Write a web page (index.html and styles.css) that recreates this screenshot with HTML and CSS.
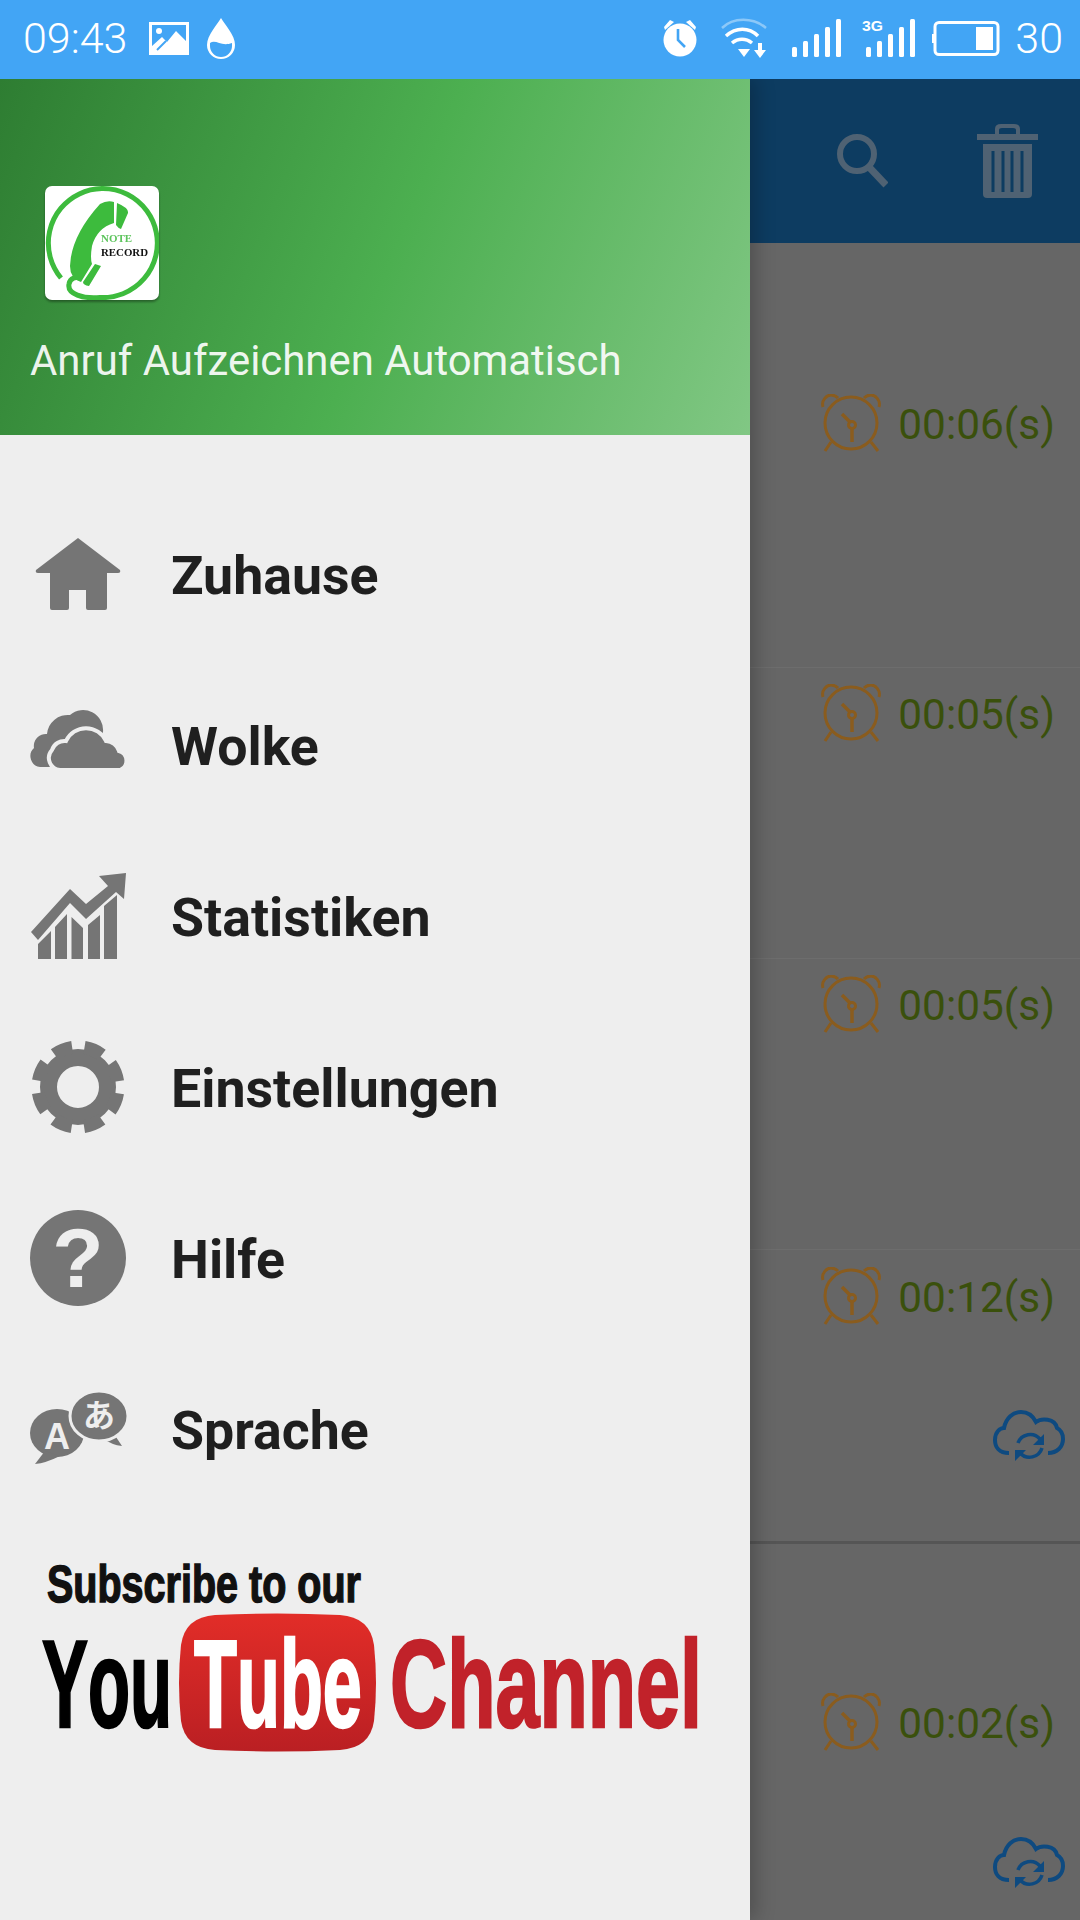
FILE: index.html
```html
<!DOCTYPE html>
<html>
    <head>
        <title>Anruf Aufzeichnen Automatisch</title>
        <meta charset="utf-8" />
        <link rel="stylesheet" href="styles.css">
    </head>
    <body>
        <div class="statusBar">
            <div class="statusGroup">
                <span class="clock">09:43</span>
                <svg class="picIcon" viewBox="0 0 40 33" width="40" height="33">
                    <path fill="#fff" fill-rule="evenodd" d="M0 0H40V33H0ZM3 3V30H37V3Z"/>
                    <path fill="#fff" d="M3 24 13 15 18 20 27 9 37 19V30H3Z"/>
                    <path stroke="#42a5f5" stroke-width="2" fill="none" d="M8 28 17 19"/>
                    <circle cx="10" cy="9" r="3" fill="#fff"/>
                </svg>
                <svg class="dropIcon" viewBox="0 0 28 41" width="28" height="41">
                    <path fill="#fff" d="M14 0C18 7 28 17 28 27A14 14 0 0 1 0 27C0 17 10 7 14 0Z"/>
                    <path fill="#42a5f5" d="M3 25C9 21 14 29 25 25V28A11 11 0 0 1 3 28Z"/>
                </svg>
            </div>
            <div class="statusGroup right">
                <svg class="alarmIcon" viewBox="0 0 36 38" width="36" height="38">
                    <circle cx="18" cy="21" r="16.5" fill="#fff"/>
                    <path fill="#fff" d="M2 8 8 1 12 3 3 11ZM34 8 28 1 24 3 33 11Z"/>
                    <path fill="none" stroke="#42a5f5" stroke-width="2.6" d="M16 10V21L23 28"/>
                </svg>
                <svg class="wifiIcon" viewBox="0 0 46 40" width="46" height="40">
                    <path fill="none" stroke="#8cc8f8" stroke-width="2.5" d="M1 10C12 -1 32 -1 45 10"/>
                    <path fill="none" stroke="#fff" stroke-width="3.5" d="M5 18C15 9 28 9 37 18M11 25C17 20 25 20 31 25"/>
                    <path fill="#fff" d="M17 31H29L23 39ZM37 25H41V32H45L39 40 33 32H37Z"/>
                </svg>
                <svg class="signalIcon" viewBox="0 0 49 38" width="49" height="38">
                    <g fill="#fff">
                        <rect x="0" y="28" width="5" height="10" rx="1.5"/>
                        <rect x="11" y="22" width="5" height="16" rx="1.5"/>
                        <rect x="22" y="15" width="5" height="23" rx="1.5"/>
                        <rect x="33" y="8" width="5" height="30" rx="1.5"/>
                        <rect x="44" y="0" width="5" height="38" rx="1.5"/>
                    </g>
                </svg>
                <svg class="signalIcon" viewBox="0 0 53 38" width="53" height="38">
                    <text class="tinyG" x="0" y="12" textLength="21" lengthAdjust="spacingAndGlyphs">3G</text>
                    <g fill="#fff">
                        <rect x="4" y="28" width="5" height="10" rx="1.5"/>
                        <rect x="15" y="22" width="5" height="16" rx="1.5"/>
                        <rect x="26" y="15" width="5" height="23" rx="1.5"/>
                        <rect x="37" y="8" width="5" height="30" rx="1.5"/>
                        <rect x="48" y="0" width="5" height="38" rx="1.5"/>
                    </g>
                </svg>
                <svg class="batteryIcon" viewBox="0 0 68 35" width="68" height="35">
                    <rect x="3" y="1.5" width="63" height="32" rx="4" fill="none" stroke="#fff" stroke-width="3"/>
                    <rect x="0" y="13" width="2" height="9" fill="#fff"/>
                    <rect x="44" y="6" width="17" height="23" fill="#fff"/>
                </svg>
                <span class="clock level">30</span>
            </div>
        </div>

        <div class="screen">
            <div class="drawer">
                <div class="drawerHead">
                    <svg class="logo" viewBox="0 0 114 114" width="114" height="114">
                        <rect width="114" height="114" rx="7" fill="#fff"/>
                        <path fill="none" stroke="#3dbb3d" stroke-width="5" d="M16 92A54.500 54.500 0 1 1 55 111.500C38 113 22 108 24 98 25 92 31 90 36 93"/>
                        <path fill="#3dbb3d" d="M55 18Q62 14 69 16V37Q52 42 47 60 45 72 47 78L36 96Q25 92 25 80 26 50 55 18Z"/>
                        <path fill="#3dbb3d" d="M72 17Q84 22 83 27L76 43Q73 42 71 39ZM50 78 56 80 44 100Q38 99 38 96Z"/>
                        <text class="logoNote" x="56" y="56" textLength="31" lengthAdjust="spacingAndGlyphs">NOTE</text>
                        <text class="logoRecord" x="56" y="70" textLength="47" lengthAdjust="spacingAndGlyphs">RECORD</text>
                    </svg>
                    <div class="appName">Anruf Aufzeichnen Automatisch</div>
                </div>

                <ul class="menu">
                    <li class="menuItem">
                        <svg class="menuIcon" viewBox="0 0 96 96">
                            <path d="M48 10 90 42Q91 45 88 45H77V80Q77 82 75 82H58Q56 82 56 80V62H39V80Q39 82 37 82H22Q20 82 20 80V45H8Q5 45 6 42Z"/>
                        </svg>
                        <span>Zuhause</span>
                    </li>
                    <li class="menuItem">
                        <svg class="menuIcon" viewBox="0 0 96 96">
                            <path d="M10 68A11 11 0 0 1 4 49 12 12 0 0 1 17 35 21 21 0 0 1 40 16 20 20 0 0 1 73 33L60 68Z"/>
                            <path stroke="#eeeeee" stroke-width="4" d="M30 71A12 12 0 0 1 22 51 13 13 0 0 1 36 42 22 22 0 0 1 76 42 14 14 0 0 1 89 52 10 10 0 0 1 90 71Z"/>
                        </svg>
                        <span>Wolke</span>
                    </li>
                    <li class="menuItem">
                        <svg class="menuIcon" viewBox="0 0 96 96">
                            <path d="M8 89V74L21 61V89ZM25 89V57L37 44V89ZM41.500 89V47L53 58V89ZM58 89V55L70 45V89ZM74 89V36L87 25V89Z"/>
                            <path d="M1 62 40 19 56 34 78 16 69 6 96 3 94 29 86 22 56 49 40 33 8 70Z"/>
                        </svg>
                        <span>Statistiken</span>
                    </li>
                    <li class="menuItem">
                        <svg class="menuIcon" viewBox="0 0 96 96">
                            <circle cx="48" cy="46" r="29.500" fill="none" stroke="#757575" stroke-width="17"/>
                            <circle cx="48" cy="46" r="40" fill="none" stroke="#757575" stroke-width="13" stroke-dasharray="19 12.416" transform="rotate(8.9 48 46)"/>
                        </svg>
                        <span>Einstellungen</span>
                    </li>
                    <li class="menuItem">
                        <svg class="menuIcon" viewBox="0 0 96 96">
                            <circle cx="48" cy="46" r="48"/>
                            <text class="helpMark" x="48" y="75" text-anchor="middle">?</text>
                        </svg>
                        <span>Hilfe</span>
                    </li>
                    <li class="menuItem">
                        <svg class="menuIcon" viewBox="0 0 96 96">
                            <ellipse cx="27" cy="50" rx="27" ry="24"/>
                            <path d="M15 68 5 81Q16 80 30 73Z"/>
                            <path d="M82 48 92 63Q82 62 72 55Z"/>
                            <ellipse cx="69" cy="33" rx="29" ry="25" stroke="#eeeeee" stroke-width="3"/>
                            <text class="langLatin" x="27" y="66" text-anchor="middle">A</text>
                            <text class="langKana" x="69" y="44" text-anchor="middle">あ</text>
                        </svg>
                        <span>Sprache</span>
                    </li>
                </ul>

                <svg class="ytBanner" viewBox="0 0 750 320" width="750" height="320">
                    <defs>
                        <linearGradient id="ytRed" x1="0" y1="0" x2="0" y2="1">
                            <stop offset="0" stop-color="#e22d28"/>
                            <stop offset="1" stop-color="#ba1f23"/>
                        </linearGradient>
                    </defs>
                    <text class="ytSub" transform="translate(47 82) scale(0.76 1)">Subscribe to our</text>
                    <text class="ytBig ytYou" transform="translate(42 207) scale(0.555 1)">You</text>
                    <path fill="url(#ytRed)" d="M215 95Q277 92 340 95 370 97 374 125 378 163 374 201 370 228 340 230 277 233 215 230 185 228 181 201 177 163 181 125 185 97 215 95Z"/>
                    <text class="ytBig ytTube" transform="translate(194 207) scale(0.567 1)">Tube</text>
                    <text class="ytBig ytChannel" transform="translate(390 207) scale(0.638 1)">Channel</text>
                </svg>
            </div>

            <div class="mainPane">
                <div class="toolbar">
                    <svg class="searchIcon" viewBox="0 0 51 54" width="51" height="54">
                        <circle cx="20" cy="20" r="17" fill="none" stroke="#4f6273" stroke-width="6"/>
                        <path stroke="#4f6273" stroke-width="7" d="M32 33 49 51"/>
                    </svg>
                    <svg class="trashIcon" viewBox="0 0 61 74" width="61" height="74">
                        <path fill="#4f6273" fill-rule="evenodd" d="M0 10H18V5Q18 0 24 0H37Q43 0 43 5V10H61V16H0ZM22 10H39V6Q39 4 36 4H25Q22 4 22 6Z"/>
                        <path fill="#4f6273" d="M6 20H55V70Q55 74 51 74H10Q6 74 6 70Z"/>
                        <path stroke="#0d3c61" stroke-width="3" d="M16 27V68M26 27V68M35 27V68M45 27V68"/>
                    </svg>
                </div>
                <div class="recList">
                    <div class="recRow first">
                        <div class="duration">
                            <svg class="alarm" viewBox="0 0 61 60"><use href="#alarmShape"/></svg>
                            <span>00:06(s)</span>
                        </div>
                    </div>
                    <div class="recRow">
                        <div class="duration">
                            <svg class="alarm" viewBox="0 0 61 60"><use href="#alarmShape"/></svg>
                            <span>00:05(s)</span>
                        </div>
                    </div>
                    <div class="recRow">
                        <div class="duration">
                            <svg class="alarm" viewBox="0 0 61 60"><use href="#alarmShape"/></svg>
                            <span>00:05(s)</span>
                        </div>
                    </div>
                    <div class="recRow synced">
                        <div class="duration">
                            <svg class="alarm" viewBox="0 0 61 60"><use href="#alarmShape"/></svg>
                            <span>00:12(s)</span>
                        </div>
                        <svg class="syncCloud" viewBox="0 0 72 52"><use href="#cloudShape"/></svg>
                    </div>
                    <div class="recRow last">
                        <div class="duration">
                            <svg class="alarm" viewBox="0 0 61 60"><use href="#alarmShape"/></svg>
                            <span>00:02(s)</span>
                        </div>
                        <svg class="syncCloud" viewBox="0 0 72 52"><use href="#cloudShape"/></svg>
                    </div>
                </div>
            </div>
        </div>

        <svg class="shapeDefs" width="0" height="0">
            <defs>
                <g id="alarmShape" fill="none" stroke="#8a5c1e" stroke-width="3">
                    <circle cx="30" cy="29" r="26"/>
                    <path d="M2 13C0 6 6 1 10 1 13 1 15 2 17 4M58 13C60 6 54 1 50 1 47 1 45 2 43 4M10 48 4 57M50 48 57 57"/>
                    <circle cx="31" cy="31" r="3.500"/>
                    <path stroke-width="3.500" d="M31 35V48M29 28 21 20"/>
                </g>
                <g id="cloudShape" fill="none" stroke="#0e4a80" stroke-width="4">
                    <path d="M16 43C6 43 2 37 2 30 2 22 7 18 11 18 13 8 20 2 28 2 35 2 40 6 43 12 48 8 62 8 64 18 68 20 70 24 70 29 70 37 64 43 55 43"/>
                    <path stroke-width="3.500" d="M25 33A13 13 0 0 1 47 29M49 38A13 13 0 0 1 27 43"/>
                    <path fill="#0e4a80" stroke="none" d="M51 24V35H40ZM22 51V40H33Z"/>
                </g>
            </defs>
        </svg>
    </body>
</html>
```

FILE: styles.css
```css
body {
    background:         #eeeeee;
    font-family:        Roboto, sans-serif;
    height:             1920px;
    margin:             0;
    overflow:           hidden;
    width:              1080px;
}

/* Status bar */
.statusBar {
    align-items:        center;
    background:         #42a5f5;
    box-sizing:         border-box;
    color:              #fff;
    display:            flex;
    height:             79px;
    justify-content:    space-between;
    padding:            0 17px 3px 23px;
    position:           relative;
    z-index:            2;
}

.statusGroup {
    align-items:        center;
    display:            flex;
    gap:                22px;
}

.statusGroup.right {
    gap:                21px;
}

.dropIcon {
    margin-left:        -4px;
}

.wifiIcon {
    margin-left:        2px;
    margin-right:       4px;
}

.signalIcon {
    overflow:           visible;
}

.batteryIcon {
    margin-left:        -4px;
}

.clock {
    font-size:          43px;
    font-weight:        300;
}

.clock.level {
    margin-left:        -6px;
}

.tinyG {
    fill:               #fff;
    font-family:        "Liberation Sans", sans-serif;
    font-size:          15px;
    font-weight:        bold;
}

/* Drawer */
.screen {
    display:            flex;
    height:             1841px;
}

.drawer {
    background:         #eeeeee;
    box-shadow:         6px 0 18px rgba(0, 0, 0, 0.22);
    flex:               none;
    position:           relative;
    width:              750px;
    z-index:            1;
}

.drawerHead {
    background:         linear-gradient(112deg, #2e7d32 0%, #4caf50 52%, #81c784 100%);
    box-sizing:         border-box;
    height:             356px;
    padding:            107px 0 0 30px;
}

.logo {
    display:            block;
    filter:             drop-shadow(0 2px 1px rgba(0, 0, 0, 0.35));
    margin-left:        15px;
}

.appName {
    color:              rgba(255, 255, 255, 0.92);
    font-size:          41.900px;
    line-height:        50px;
    margin-top:         36px;
}

.logoNote, .logoRecord {
    font-family:        "Liberation Serif", serif;
    font-size:          11px;
    font-weight:        bold;
}

.logoNote {
    fill:               #5cc45c;
}

.logoRecord {
    fill:               #111;
}

.menu {
    list-style:         none;
    margin:             0;
    padding:            55px 0 0 30px;
}

.menuItem {
    align-items:        center;
    color:              #1f1f1f;
    display:            flex;
    font-size:          53.700px;
    font-weight:        bold;
    gap:                45px;
    height:             171px;
}

.menuIcon {
    fill:               #757575;
    flex:               none;
    height:             96px;
    overflow:           visible;
    width:              96px;
}

.helpMark {
    fill:               #eeeeee;
    font-family:        "Liberation Sans", sans-serif;
    font-size:          84px;
    font-weight:        bold;
}

.langLatin, .langKana {
    fill:               #eeeeee;
}

.langLatin {
    font-family:        "Liberation Sans", sans-serif;
    font-size:          36px;
    font-weight:        bold;
}

.langKana {
    font-family:        "Noto Sans CJK JP", sans-serif;
    font-size:          32px;
}

/* YouTube banner */
.ytBanner {
    display:            block;
    margin-top:         4px;
}

.ytSub, .ytBig {
    font-family:        "Liberation Sans", sans-serif;
    font-kerning:       none;
    font-weight:        bold;
}

.ytSub {
    fill:               #111;
    font-size:          52px;
    stroke:             #111;
    stroke-width:       1.500px;
}

.ytBig {
    font-size:          124px;
    stroke-width:       2.500px;
}

.ytYou {
    fill:               #000;
    stroke:             #000;
}

.ytTube {
    fill:               #fff;
    stroke:             #fff;
}

.ytChannel {
    fill:               #c1222a;
    stroke:             #c1222a;
}

/* Dimmed recordings list */
.mainPane {
    background:         #666666;
    flex:               1;
    min-width:          0;
}

.toolbar {
    align-items:        center;
    background:         #0d3c61;
    display:            flex;
    gap:                89px;
    height:             164px;
    justify-content:    flex-end;
    padding-right:      42px;
}

.recRow {
    align-items:        flex-end;
    border-bottom:      1px solid #6d6d6d;
    box-sizing:         border-box;
    display:            flex;
    flex-direction:     column;
    height:             291px;
    padding:            16px 25px 0 0;
}

.recRow.first {
    height:             425px;
    padding-top:        151px;
}

.recRow.synced {
    border-bottom:      3px solid #555;
    height:             294px;
    padding-top:        17px;
}

.recRow.last {
    border-bottom:      0;
    height:             auto;
    padding-top:        149px;
}

.duration {
    align-items:        center;
    color:              #3a500c;
    display:            flex;
    font-size:          42.400px;
    gap:                16px;
}

.alarm {
    height:             60px;
    width:              61px;
}

.syncCloud {
    height:             52px;
    margin:             83px -10px 0 0;
    width:              72px;
}

.recRow.last .syncCloud {
    margin-top:         84px;
}

.shapeDefs {
    display:            block;
    height:             0;
}
```
